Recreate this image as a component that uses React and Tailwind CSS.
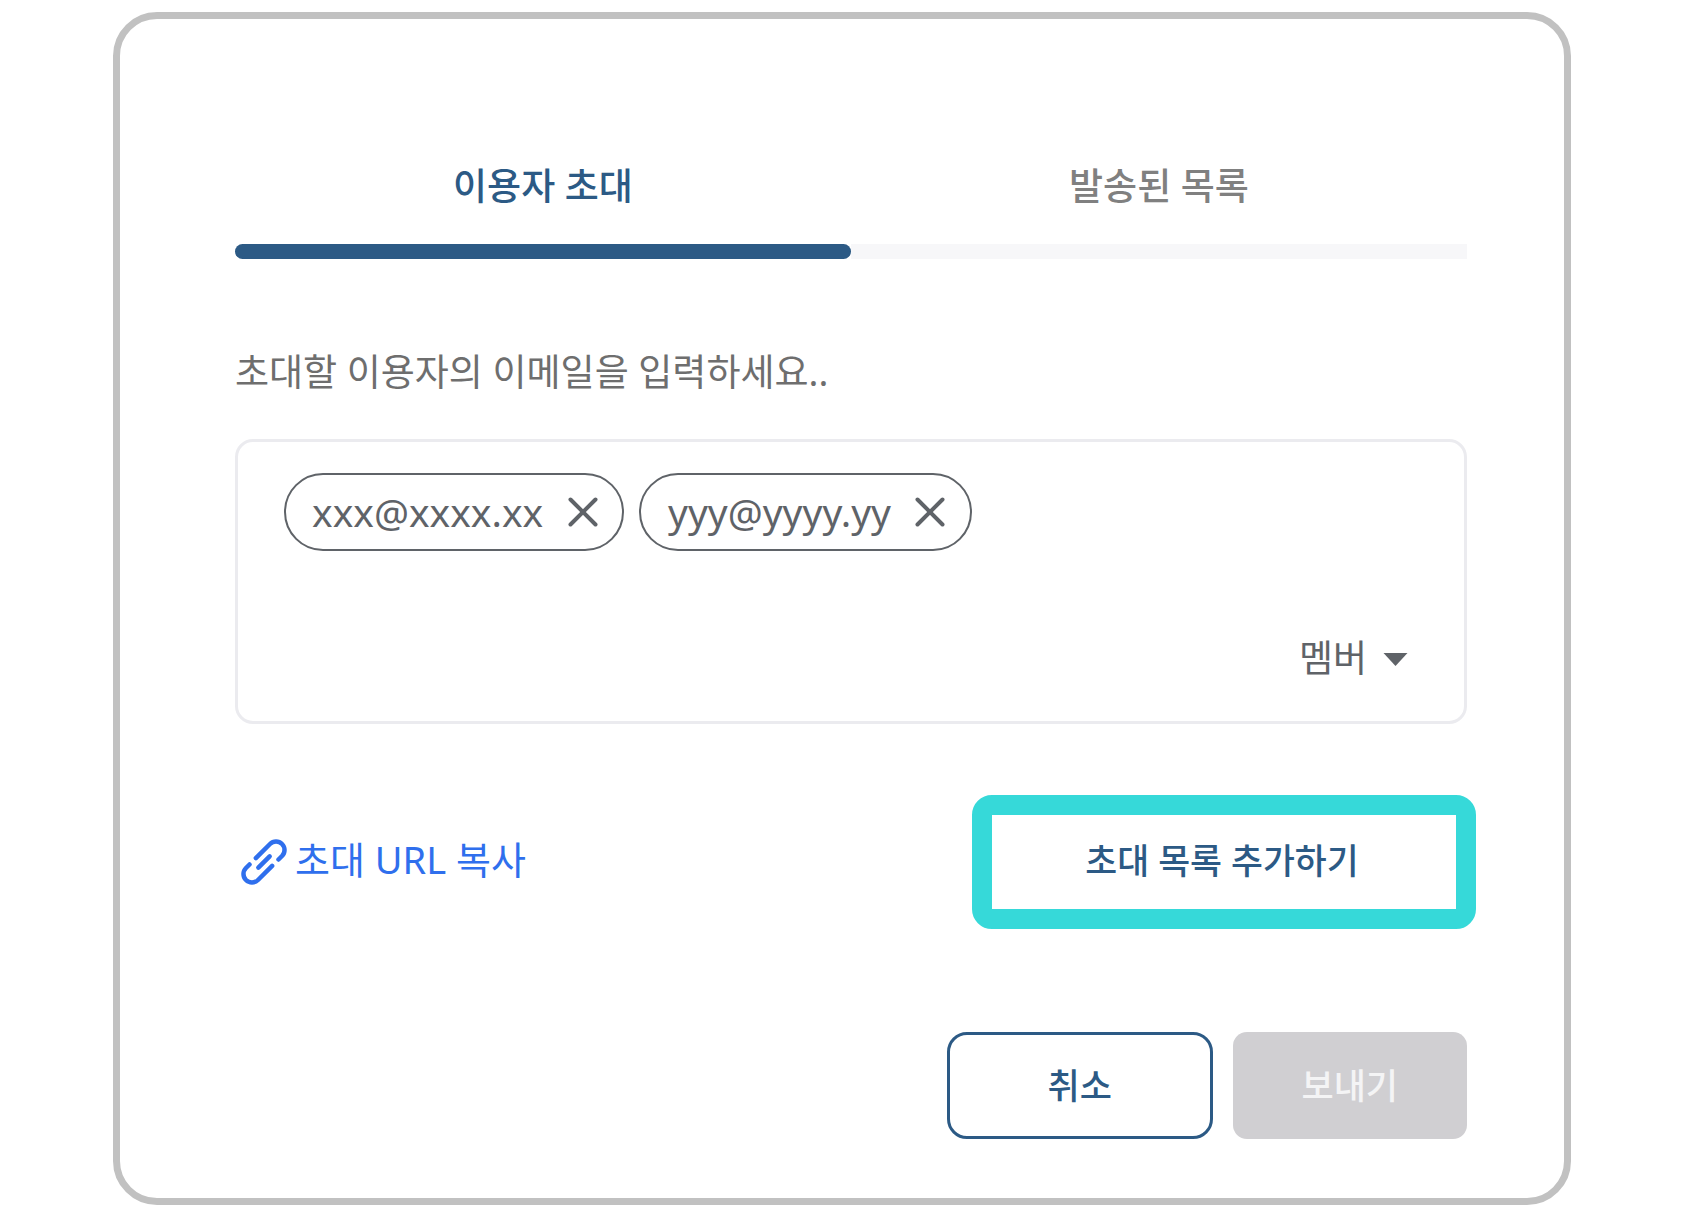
import React from "react";

const font = "font-['Noto_Sans','Noto_Sans_CJK_KR',sans-serif]";

function CloseIcon() {
  return (
    <svg width="30" height="30" viewBox="0 0 30 30" fill="none" stroke="#5f6368" strokeWidth="4" strokeLinecap="round" aria-hidden="true">
      <path d="M2.5 2.5 L27.5 27.5 M27.5 2.5 L2.5 27.5" />
    </svg>
  );
}

function LinkIcon() {
  return (
    <svg width="46" height="46" viewBox="0 0 46 46" fill="none" stroke="#2f6fed" strokeWidth="4.5" strokeLinecap="round" aria-hidden="true">
      <g transform="translate(23 23) rotate(-45)">
        <path d="M-12 -8.5 H-17 A8.5 8.5 0 0 0 -17 8.5 H3" />
        <path d="M-3 -8.5 H17 A8.5 8.5 0 0 1 17 8.5 H12" />
        <path d="M-8 0 H8" />
      </g>
    </svg>
  );
}

function Chip({ label, className }) {
  return (
    <div className={`flex items-center justify-between h-[78px] rounded-full border-2 border-[#5f6368] bg-white text-[39px] text-[#5f6368] ${className}`}>
      <span>{label}</span>
      <CloseIcon />
    </div>
  );
}

export default function App() {
  return (
    <div className={`w-[1686px] h-[1220px] bg-white pt-[12px] pl-[113px] ${font}`}>
      <div className="w-[1458px] h-[1193px] rounded-[44px] border-[7px] border-[#c1c1c1] bg-white pt-[130px] px-[115px]">
        <div className="flex w-[1232px]">
          <div className="w-[616px]">
            <div className="h-[95px] text-center text-[37px] leading-[73px] font-medium text-[#2c5a85]">이용자 초대</div>
            <div className="h-[15px] rounded-full bg-[#2c5a85]"></div>
          </div>
          <div className="w-[616px]">
            <div className="h-[95px] text-center text-[37px] leading-[73px] font-medium text-[#808080]">발송된 목록</div>
            <div className="h-[15px] bg-[#f7f7f9]"></div>
          </div>
        </div>

        <p className="mt-[88px] text-[37px] leading-[50px] text-[#6e6e6e]">초대할 이용자의 이메일을 입력하세요..</p>

        <div className="mt-[42px] w-[1232px] h-[285px] rounded-[18px] border-[3px] border-[#ebebef] pt-[31px] pl-[46px] pr-[56px] flex flex-col justify-between pb-[41px]">
          <div className="flex gap-[15px]">
            <Chip label="xxx@xxxx.xx" className="w-[340px] pl-[26px] pr-[24px]" />
            <Chip label="yyy@yyyy.yy" className="w-[333px] pl-[27px] pr-[25px]" />
          </div>
          <div className="flex items-center justify-end gap-[16px] text-[37px] leading-[44px] text-[#5f6368]">
            <span>멤버</span>
            <svg className="mt-[2px]" width="25" height="13" viewBox="0 0 25 13" aria-hidden="true">
              <path d="M0.5 0 H24.5 L12.5 13 Z" fill="#5f6368" />
            </svg>
          </div>
        </div>

        <div className="mt-[71px] flex items-center justify-between w-[1241px]">
          <a className="flex items-center gap-[8px] pl-[6px] text-[38px] text-[#2f6fed]">
            <LinkIcon />
            <span className="pb-[6px]">초대 URL 복사</span>
          </a>
          <button className="w-[504px] h-[134px] rounded-[20px] border-[20px] border-[#36d9d9] bg-white pr-[4px] pb-[2px] text-[34.7px] font-medium text-[#2c5a85]">초대 목록 추가하기</button>
        </div>

        <div className="mt-[103px] w-[1232px] flex justify-end gap-[20px]">
          <button className="w-[265.5px] h-[107px] rounded-[20px] border-[3px] border-[#2c5a85] bg-white pt-[2px] text-[35px] font-medium text-[#2c5a85]">취소</button>
          <button className="w-[234.5px] h-[107px] rounded-[14px] bg-[#d0cfd2] pt-[2px] text-[35px] font-medium text-[#f4f4f5]">보내기</button>
        </div>
      </div>
    </div>
  );
}
